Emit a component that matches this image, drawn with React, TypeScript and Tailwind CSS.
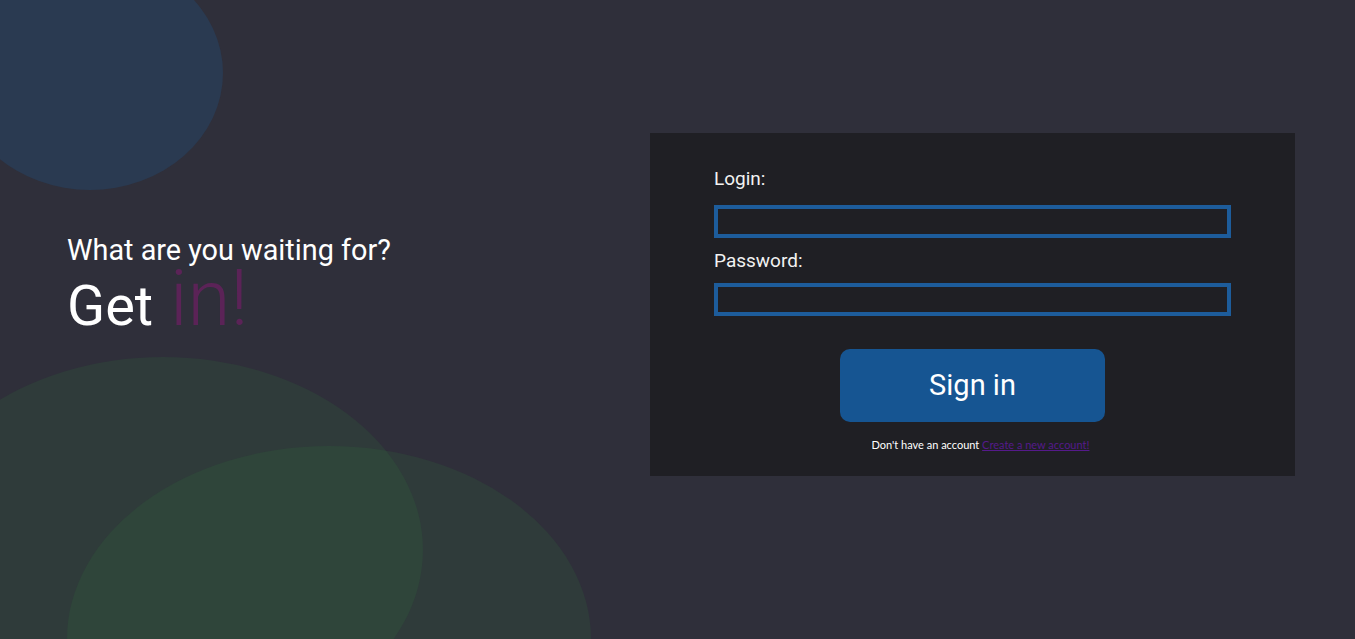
import React from 'react';

const App: React.FC = () => {
  return (
    <div className="relative w-full h-[639px] overflow-hidden bg-[#2f2f3a] font-['Roboto',sans-serif]">
      {/* background blobs */}
      <div className="absolute left-[-43px] top-[-44px] w-[266px] h-[234px] rounded-[50%] bg-[#2a3a51]" />
      <div className="absolute left-[-97px] top-[357px] w-[520px] h-[386px] rounded-[50%] bg-[rgba(46,125,60,0.15)]" />
      <div className="absolute left-[67px] top-[446px] w-[524px] h-[386px] rounded-[50%] bg-[rgba(46,125,60,0.15)]" />

      <div className="relative flex h-full">
        {/* Left heading */}
        <div className="w-[650px] pl-[67px] pt-[234px]">
          <h2 className="text-[28.8px] leading-[33px] text-white">What are you waiting for?</h2>
          <h1 className="mt-[-1px] text-[56px] leading-[66px] text-white">
            Get <span className="ml-[3px] text-[78px] font-light text-[#5b2357]">in!</span>
          </h1>
        </div>

        {/* Login card */}
        <div className="mt-[133px] w-[645px] h-[343px] bg-[#1f1f24] px-[64px] pt-[35px]">
          <form className="flex flex-col">
            <label className="text-[19px] leading-[22px] text-[#f2f2f2]">Login:</label>
            <input
              type="text"
              className="mt-[15px] h-[33px] w-full border-4 border-[#1d5c9b] bg-transparent outline-none text-white"
            />
            <label className="mt-[12px] text-[19px] leading-[22px] text-[#f2f2f2]">Password:</label>
            <input
              type="password"
              className="mt-[11px] h-[33px] w-full border-4 border-[#1d5c9b] bg-transparent outline-none text-white"
            />
            <button
              type="button"
              className="mx-auto mt-[33px] flex h-[73px] w-[265px] items-center justify-center rounded-[10px] bg-[#165592] text-[29px] text-white"
            >
              Sign in
            </button>
            <p className="mt-[16px] ml-[16px] text-center font-['Lato',sans-serif] text-[11px] leading-[14px] text-white">
              Don't have an account{' '}
              <a href="#" className="text-[#551a8b] underline">
                Create a new account!
              </a>
            </p>
          </form>
        </div>
      </div>
    </div>
  );
};

export default App;
